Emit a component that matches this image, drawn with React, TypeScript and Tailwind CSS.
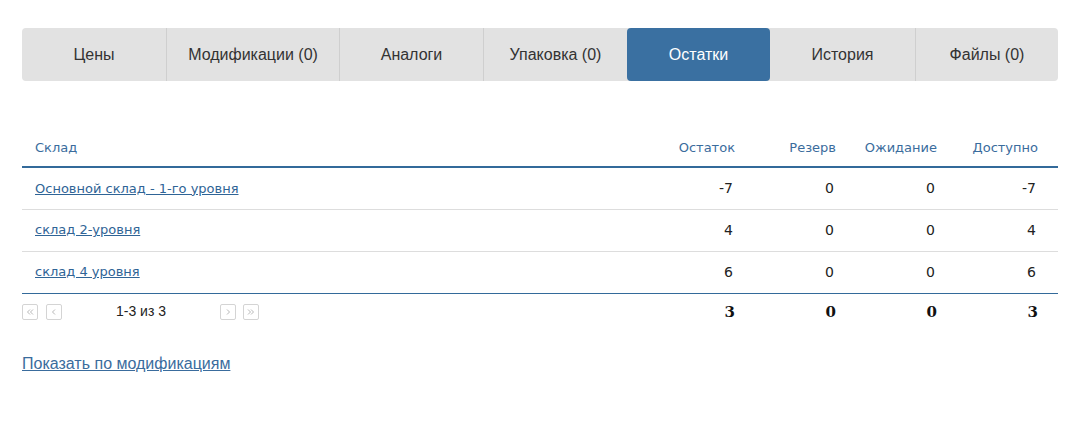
const tabs = [
  { label: 'Цены', w: 'w-[144px]' },
  { label: 'Модификации (0)', w: 'w-[173px]' },
  { label: 'Аналоги', w: 'w-[144px]' },
  { label: 'Упаковка (0)', w: 'w-[144px]' },
  { label: 'Остатки', w: 'w-[143px]', active: true },
  { label: 'История', w: 'w-[145px]' },
  { label: 'Файлы (0)', w: 'flex-1' },
];

const rows = [
  { name: 'Основной склад - 1-го уровня', stock: '-7', reserve: '0', wait: '0', free: '-7' },
  { name: 'склад 2-уровня', stock: '4', reserve: '0', wait: '0', free: '4' },
  { name: 'склад 4 уровня', stock: '6', reserve: '0', wait: '0', free: '6' },
];

function PageBtn({ children }: { children: React.ReactNode }) {
  return (
    <span className="flex h-4 w-4 items-center justify-center rounded-[2px] border border-[#d4d4d4] text-[#c4c4c4]">
      {children}
    </span>
  );
}

function Chevron({ dir, double }: { dir: 'left' | 'right'; double?: boolean }) {
  const flip = dir === 'left' ? 'scale(-1,1) translate(-10,0)' : undefined;
  return (
    <svg width="10" height="10" viewBox="0 0 10 10" fill="none" stroke="#b8b8b8" strokeWidth="1">
      <g transform={flip}>
        {double ? (
          <>
            <path d="M2 2.5 L4.5 5 L2 7.5" />
            <path d="M5 2.5 L7.5 5 L5 7.5" />
          </>
        ) : (
          <path d="M4 2.5 L6.5 5 L4 7.5" />
        )}
      </g>
    </svg>
  );
}

export default function App() {
  return (
    <div className="min-h-[448px] bg-white pl-[22px] pr-[25px] pt-[28px] font-['Liberation_Sans',Arial,sans-serif]">
      <div className="flex h-[53px] overflow-hidden rounded-[4px] bg-[#e2e2e2]">
        {tabs.map((t, i) => (
          <div
            key={t.label}
            className={`${t.w} flex items-center justify-center text-[16px] ${
              t.active
                ? 'rounded-[4px] bg-[#3a70a1] text-white'
                : `text-[#333] ${i > 0 && !tabs[i - 1].active ? 'border-l border-[#cfcfcf]' : ''} ${i === 6 ? 'border-l border-[#cfcfcf]' : ''}`
            }`}
          >
            {t.label}
          </div>
        ))}
      </div>

      <table className="mt-[48px] w-full border-collapse font-['DejaVu_Sans',Verdana,sans-serif] text-[13px]">
        <thead>
          <tr className="h-[38px] border-b-2 border-[#336a9a] text-[#3a6c9d]">
            <th className="pl-[13px] text-left font-normal">Склад</th>
            <th className="w-[101px] pr-[20px] text-right font-normal">Остаток</th>
            <th className="w-[101px] pr-[20px] text-right font-normal">Резерв</th>
            <th className="w-[101px] pr-[20px] text-right font-normal">Ожидание</th>
            <th className="w-[101px] pr-[20px] text-right font-normal">Доступно</th>
          </tr>
        </thead>
        <tbody className="text-[#222]">
          {rows.map((r, i) => (
            <tr
              key={r.name}
              className={`h-[42px] ${i < rows.length - 1 ? 'border-b border-[#dddddd]' : 'border-b border-[#336a9a]'}`}
            >
              <td className="pl-[13px]">
                <a href="#" className="text-[#2f6496] underline">
                  {r.name}
                </a>
              </td>
              <td className="pr-[22px] text-right text-[14px]">{r.stock}</td>
              <td className="pr-[22px] text-right text-[14px]">{r.reserve}</td>
              <td className="pr-[22px] text-right text-[14px]">{r.wait}</td>
              <td className="pr-[22px] text-right text-[14px]">{r.free}</td>
            </tr>
          ))}
        </tbody>
        <tfoot>
          <tr className="h-[37px] font-['DejaVu_Serif',serif] text-[15px] font-bold text-[#111]">
            <td>
              <div className="flex items-center font-['Liberation_Sans',Arial,sans-serif] text-[14px] font-normal text-[#222]">
                <div className="flex gap-[8px]">
                  <PageBtn>
                    <Chevron dir="left" double />
                  </PageBtn>
                  <PageBtn>
                    <Chevron dir="left" />
                  </PageBtn>
                </div>
                <span className="ml-[54px] w-[104px]">1-3 из 3</span>
                <div className="flex gap-[7px]">
                  <PageBtn>
                    <Chevron dir="right" />
                  </PageBtn>
                  <PageBtn>
                    <Chevron dir="right" double />
                  </PageBtn>
                </div>
              </div>
            </td>
            <td className="pr-[20px] text-right">3</td>
            <td className="pr-[20px] text-right">0</td>
            <td className="pr-[20px] text-right">0</td>
            <td className="pr-[20px] text-right">3</td>
          </tr>
        </tfoot>
      </table>

      <a href="#" className="mt-[22px] inline-block text-[16px] text-[#3a6c9d] underline">
        Показать по модификациям
      </a>
    </div>
  );
}
